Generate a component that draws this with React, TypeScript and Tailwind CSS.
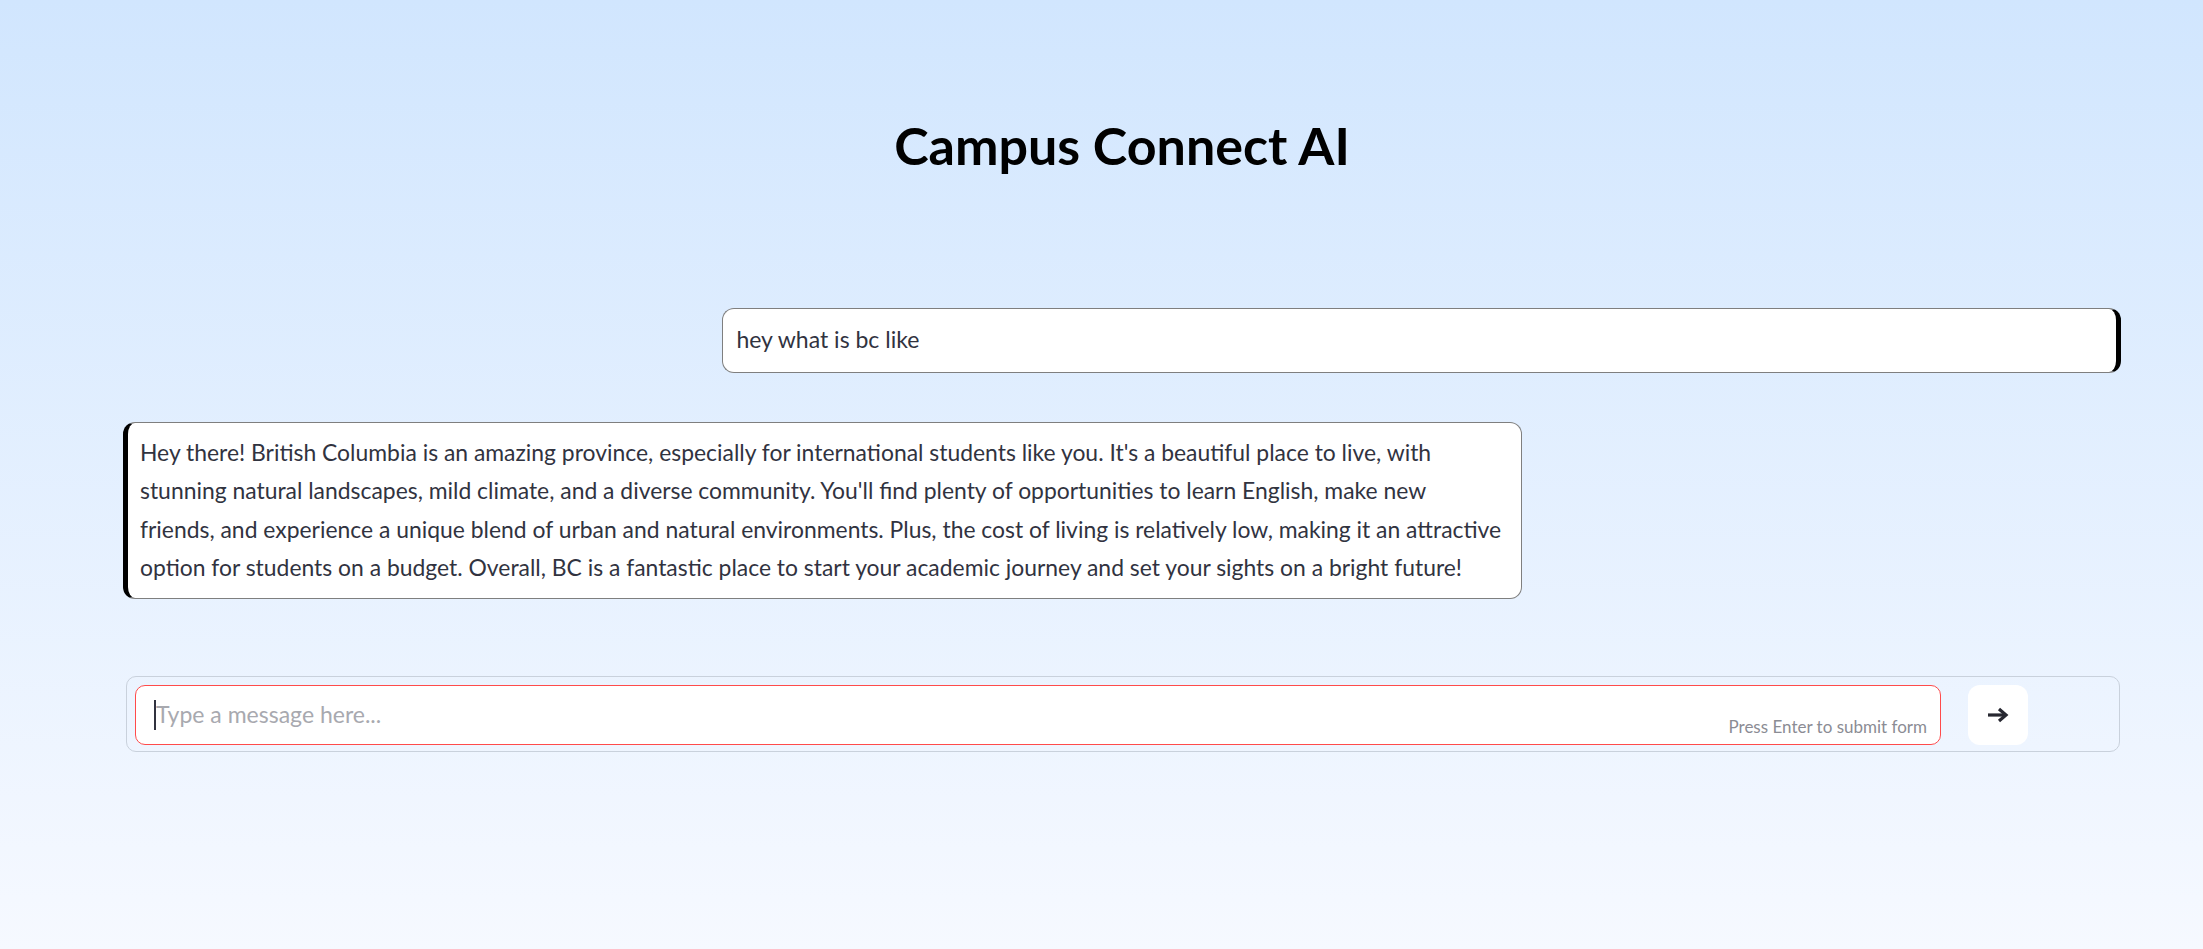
import React from "react";

export default function App() {
  const font = { fontFamily: "Lato, 'Noto Sans', sans-serif" };
  return (
    <div
      className="h-screen w-full overflow-hidden bg-gradient-to-b from-[#d1e6fe] to-[#f6f9ff] text-[#31333f]"
      style={font}
    >
      <div className="pl-[123px] pr-[82px] pt-[114px]">
        <h1 className="text-center text-[52px] leading-[1.2] font-bold text-black">
          Campus Connect AI
        </h1>

        <div className="mt-[132px] flex justify-end">
          <div className="w-[70%] rounded-xl border border-[#7f7f7f] border-r-[5px] border-r-black bg-white px-[13px] pt-[11px] pb-[13px] text-[23px] leading-[38.4px]">
            hey what is bc like
          </div>
        </div>

        <div className="mt-[49px] flex">
          <div className="w-[70%] rounded-xl border border-[#7f7f7f] border-l-[5px] border-l-black bg-white pt-[10px] pb-[12px] pl-[12px] pr-[12px] text-[22.9px] leading-[38.4px] whitespace-nowrap">
            Hey there! British Columbia is an amazing province, especially for international students like you. It's a beautiful place to live, with
            <br />
            stunning natural landscapes, mild climate, and a diverse community. You'll find plenty of opportunities to learn English, make new
            <br />
            friends, and experience a unique blend of urban and natural environments. Plus, the cost of living is relatively low, making it an attractive
            <br />
            option for students on a budget. Overall, BC is a fantastic place to start your academic journey and set your sights on a bright future!
          </div>
        </div>

        <div className="mt-[77px] ml-[3px] mr-[1px] flex items-start rounded-[10px] border border-[#c9d1dc] pl-[8px] pt-[8px] pb-[6px] pr-[91px]">
          <div className="relative flex h-[60px] flex-1 items-center rounded-[10px] border border-[#ff4b4b] bg-white pl-[18px]">
            <span className="h-[30px] w-[2px] bg-[#31333f]" />
            <span className="-mt-[2px] text-[23px] text-[#a8a9af]">Type a message here...</span>
            <span className="absolute right-[13px] bottom-[7px] text-[17px] leading-[1.2] text-[#8b8c94]">
              Press Enter to submit form
            </span>
          </div>
          <button className="ml-[27px] flex h-[60px] w-[60px] items-center justify-center rounded-[12px] bg-white">
            <svg width="22" height="16" viewBox="0 0 22 16" fill="none">
              <path d="M1 8 H18" stroke="#262730" strokeWidth="3.2" />
              <path d="M12 2 L19 8 L12 14" stroke="#262730" strokeWidth="3.2" strokeLinejoin="miter" />
            </svg>
          </button>
        </div>
      </div>
    </div>
  );
}
